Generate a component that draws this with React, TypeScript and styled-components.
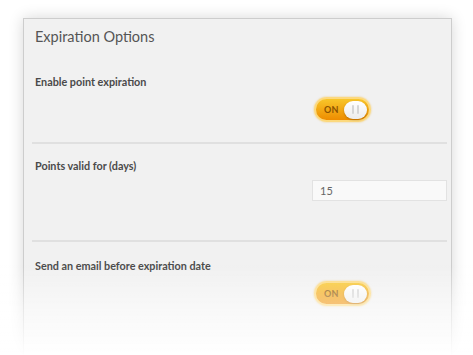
import * as React from 'react';
import styled, { createGlobalStyle } from 'styled-components';

const GlobalStyle = createGlobalStyle`
  html, body {
    margin: 0;
    padding: 0;
    background: #ffffff;
    font-family: Lato, "Open Sans", "Liberation Sans", sans-serif;
    overflow: hidden;
  }
`;

const Page = styled.div`
  padding: 18px 21px 0 23px;
  height: 355px;
  box-sizing: border-box;
  overflow: hidden;
`;

const Panel = styled.section`
  background: #f1f1f1;
  border: 1px solid #cdcdcd;
  box-shadow: 0 0 14px rgba(0, 0, 0, 0.16);
  padding: 0 4px 60px 8px;
  min-height: 400px;
`;

const Title = styled.h2`
  margin: 0;
  padding: 9px 0 0 3px;
  font-size: 14.5px;
  line-height: 18px;
  font-weight: 400;
  color: #555555;
`;

const Field = styled.div<{ $top: number; $bottom: number; $divider?: boolean }>`
  display: grid;
  grid-template-columns: 1fr 135px;
  row-gap: 7px;
  padding: ${p => p.$top}px 0 ${p => p.$bottom}px;
  border-bottom: ${p => (p.$divider ? '2px solid #e0e0e0' : 'none')};
`;

const Label = styled.label`
  grid-column: 1 / span 2;
  padding-left: 3px;
  font-size: 10.8px;
  line-height: 14px;
  font-weight: 700;
  color: #4a4a4a;
`;

const Control = styled.div`
  grid-column: 2;
  display: flex;
`;

const Toggle = styled.div`
  margin: 1px 0 0 2px;
  width: 43px;
  height: 21px;
  border-radius: 13px;
  background: linear-gradient(#f8c62a, #ee8c00);
  border: 2px solid #fcd97e;
  box-shadow: 0 0 2px rgba(240, 170, 0, 0.55);
  display: flex;
  align-items: center;
  justify-content: space-between;
  padding: 0 2px 0 8px;
  box-sizing: content-box;
`;

const ToggleText = styled.span`
  font-size: 9px;
  font-weight: 700;
  color: #8a5200;
  letter-spacing: 0.2px;
`;

const Knob = styled.span`
  width: 23px;
  height: 18px;
  border-radius: 10px;
  background: linear-gradient(#ffffff, #ececec);
  box-shadow: 0 1px 2px rgba(120, 70, 0, 0.45);
  display: flex;
  align-items: center;
  justify-content: center;
  gap: 3px;

  &::before, &::after {
    content: '';
    width: 2px;
    height: 9px;
    background: #d6d6d6;
    border-radius: 1px;
  }
`;

const Input = styled.input`
  width: 135px;
  height: 21px;
  box-sizing: border-box;
  border: 1px solid #e2e2e2;
  background: #f9f9f9;
  padding: 0 7px;
  font-family: Lato, "Open Sans", "Liberation Sans", sans-serif;
  font-size: 11px;
  color: #666666;
  outline: none;
`;

const Fade = styled.div`
  position: fixed;
  left: 0;
  right: 0;
  bottom: 0;
  height: 90px;
  background: linear-gradient(rgba(255, 255, 255, 0), rgba(255, 255, 255, 0.55) 50%, rgba(255, 255, 255, 0.97));
  pointer-events: none;
`;

const Switch = () => (
  <Toggle>
    <ToggleText>ON</ToggleText>
    <Knob />
  </Toggle>
);

export default function App() {
  return (
    <>
      <GlobalStyle />
      <Page>
        <Panel>
          <Title>Expiration Options</Title>
          <Field $top={29} $bottom={20} $divider>
            <Label>Enable point expiration</Label>
            <Control><Switch /></Control>
          </Field>
          <Field $top={15} $bottom={39} $divider>
            <Label>Points valid for (days)</Label>
            <Control><Input defaultValue="15" /></Control>
          </Field>
          <Field $top={17} $bottom={20}>
            <Label>Send an email before expiration date</Label>
            <Control><Switch /></Control>
          </Field>
        </Panel>
      </Page>
      <Fade />
    </>
  );
}
